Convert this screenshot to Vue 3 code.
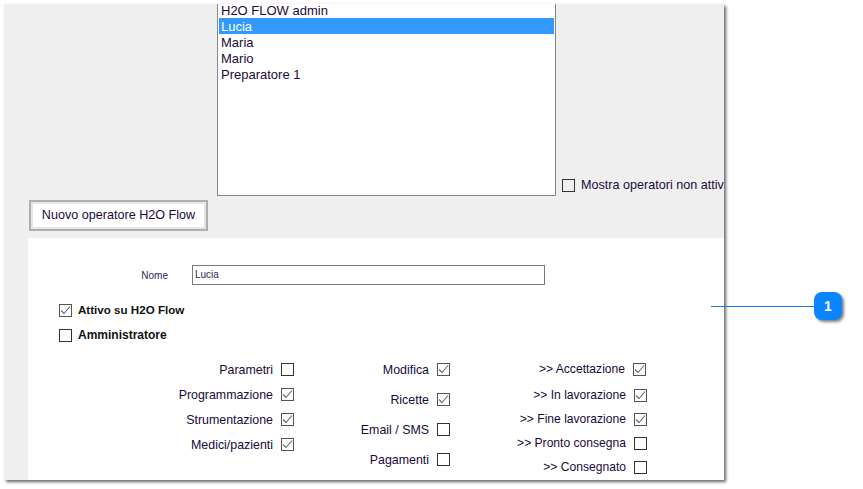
<template>
    <div class="page">
        <div class="panel">
            <div class="top-area">
                <div class="list-row">
                    <ul class="operator-list">
                        <li
                            v-for="op in operators"
                            :key="op"
                            :class="{ selected: op === 'Lucia' }"
                        >
                            {{ op }}
                        </li>
                    </ul>
                    <label class="show-inactive">
                        <span class="box"></span>
                        <span>Mostra operatori non attivi</span>
                    </label>
                </div>
                <div class="new-button">Nuovo operatore H2O Flow</div>
            </div>
            <div class="form-area">
                <div class="name-row">
                    <span class="name-label">Nome</span>
                    <div class="name-input">Lucia</div>
                </div>
                <div class="main-check first">
                    <span class="box on">
                        <svg viewBox="0 0 11 11" width="11" height="11"><path d="M1 5.5 L4 8.5 L10 1.5" /></svg>
                    </span>
                    <b>Attivo su H2O Flow</b>
                </div>
                <div class="main-check second">
                    <span class="box"></span>
                    <b>Amministratore</b>
                </div>
                <div class="perm-columns">
                    <div
                        v-for="col in columns"
                        :key="col.name"
                        class="perm-col"
                        :class="col.name"
                    >
                        <div v-for="item in col.items" :key="item.label" class="perm-item">
                            <span class="perm-label">{{ item.label }}</span>
                            <span class="box" :class="{ on: item.on }">
                                <svg v-if="item.on" viewBox="0 0 11 11" width="11" height="11"><path d="M1 5.5 L4 8.5 L10 1.5" /></svg>
                            </span>
                        </div>
                    </div>
                </div>
            </div>
        </div>
        <div class="callout-line"></div>
        <div class="callout-badge">1</div>
    </div>
</template>

<script setup>
const operators = ["H2O FLOW admin", "Lucia", "Maria", "Mario", "Preparatore 1"];

const columns = [
    {
        name: "col-a",
        items: [
            { label: "Parametri", on: false },
            { label: "Programmazione", on: true },
            { label: "Strumentazione", on: true },
            { label: "Medici/pazienti", on: true },
        ],
    },
    {
        name: "col-b",
        items: [
            { label: "Modifica", on: true },
            { label: "Ricette", on: true },
            { label: "Email / SMS", on: false },
            { label: "Pagamenti", on: false },
        ],
    },
    {
        name: "col-c",
        items: [
            { label: ">> Accettazione", on: true },
            { label: ">> In lavorazione", on: true },
            { label: ">> Fine lavorazione", on: true },
            { label: ">> Pronto consegna", on: false },
            { label: ">> Consegnato", on: false },
        ],
    },
];
</script>

<style>
html,
body {
    margin: 0;
    background: #fff;
}
</style>

<style scoped>
.page {
    position: relative;
    width: 863px;
    height: 489px;
    padding: 4px 0 0 4px;
    box-sizing: border-box;
    overflow: hidden;
    font-family: "Liberation Sans", Arial, sans-serif;
    color: #1a0a3c;
}

.panel {
    width: 720px;
    height: 476px;
    background: #efefef;
    overflow: hidden;
    box-shadow: 2px 2px 3px rgba(0, 0, 0, 0.6);
}

.top-area {
    height: 234px;
}

.list-row {
    display: flex;
    align-items: flex-end;
    padding-left: 213px;
    white-space: nowrap;
}

.operator-list {
    flex: none;
    width: 339px;
    height: 192px;
    box-sizing: border-box;
    margin: 0;
    padding: 0 1px;
    list-style: none;
    overflow: hidden;
    background: #fff;
    border: 1px solid #828790;
    border-top: 0;
    font-size: 13px;
    line-height: 18px;
}

.operator-list li {
    padding-left: 2px;
    height: 16px;
}

.operator-list li:first-child {
    margin-top: -2px;
}

.operator-list li.selected {
    background: #3399ff;
    color: #fff;
}

.show-inactive {
    display: flex;
    align-items: center;
    gap: 6px;
    margin: 0 0 4px 6px;
    font-size: 12.6px;
}

.box {
    flex: none;
    width: 11px;
    height: 11px;
    border: 1px solid #333;
    background: #fff;
    display: inline-flex;
    align-items: center;
    justify-content: center;
}

.box.on {
    border-color: #555;
}

.box svg path {
    fill: none;
    stroke: #666;
    stroke-width: 1.1;
}

.show-inactive .box {
    background: transparent;
}

.new-button {
    width: 179px;
    height: 31px;
    box-sizing: border-box;
    margin: 4px 0 0 25px;
    background: #fff;
    border: 2px solid #aeaeae;
    box-shadow: inset 0 0 0 2px #e6e6e6;
    font-size: 12.6px;
    line-height: 27px;
    text-align: center;
}

.form-area {
    margin-left: 24px;
    height: 242px;
    background: #fff;
    padding-top: 27px;
    box-sizing: border-box;
}

.name-row {
    display: flex;
    align-items: center;
    height: 20px;
    font-size: 10px;
}

.name-label {
    width: 140px;
    text-align: right;
    color: #2a2a55;
}

.name-input {
    width: 353px;
    height: 20px;
    box-sizing: border-box;
    margin-left: 24px;
    padding-left: 2px;
    border: 1px solid #7a7a7a;
    line-height: 18px;
    color: #2a2a55;
}

.main-check {
    display: flex;
    align-items: center;
    gap: 6px;
    padding-left: 31px;
    font-size: 12px;
    height: 13px;
    color: #111;
}

.main-check b {
    margin-bottom: 2px;
}

.main-check.first {
    margin-top: 19px;
    font-size: 11.6px;
}

.main-check.second {
    margin-top: 12px;
}

.perm-columns {
    display: flex;
    margin-top: 21px;
    font-size: 12.4px;
}

.perm-col {
    display: flex;
    flex-direction: column;
    align-items: flex-end;
}

.perm-item {
    display: flex;
    align-items: center;
    gap: 8px;
    height: 13px;
}

.col-a {
    width: 266px;
    gap: 12px;
}

.col-b {
    width: 156px;
    gap: 17px;
}

.col-c {
    width: 197px;
    gap: 11px;
    font-size: 12.1px;
}

.col-c .perm-item:first-child {
    margin-right: 1px;
    margin-bottom: 2px;
}

.col-c .perm-label {
    margin-bottom: 2px;
}

.callout-line {
    position: absolute;
    left: 711px;
    top: 306px;
    width: 104px;
    height: 1px;
    background: #1a7fd9;
}

.callout-badge {
    position: absolute;
    left: 814px;
    top: 292px;
    width: 28px;
    height: 28px;
    border-radius: 8px;
    background: #0a84ff;
    color: #fff;
    font-size: 14px;
    font-weight: bold;
    line-height: 28px;
    text-align: center;
    box-shadow: 2px 2px 3px rgba(0, 0, 0, 0.5);
}
</style>
